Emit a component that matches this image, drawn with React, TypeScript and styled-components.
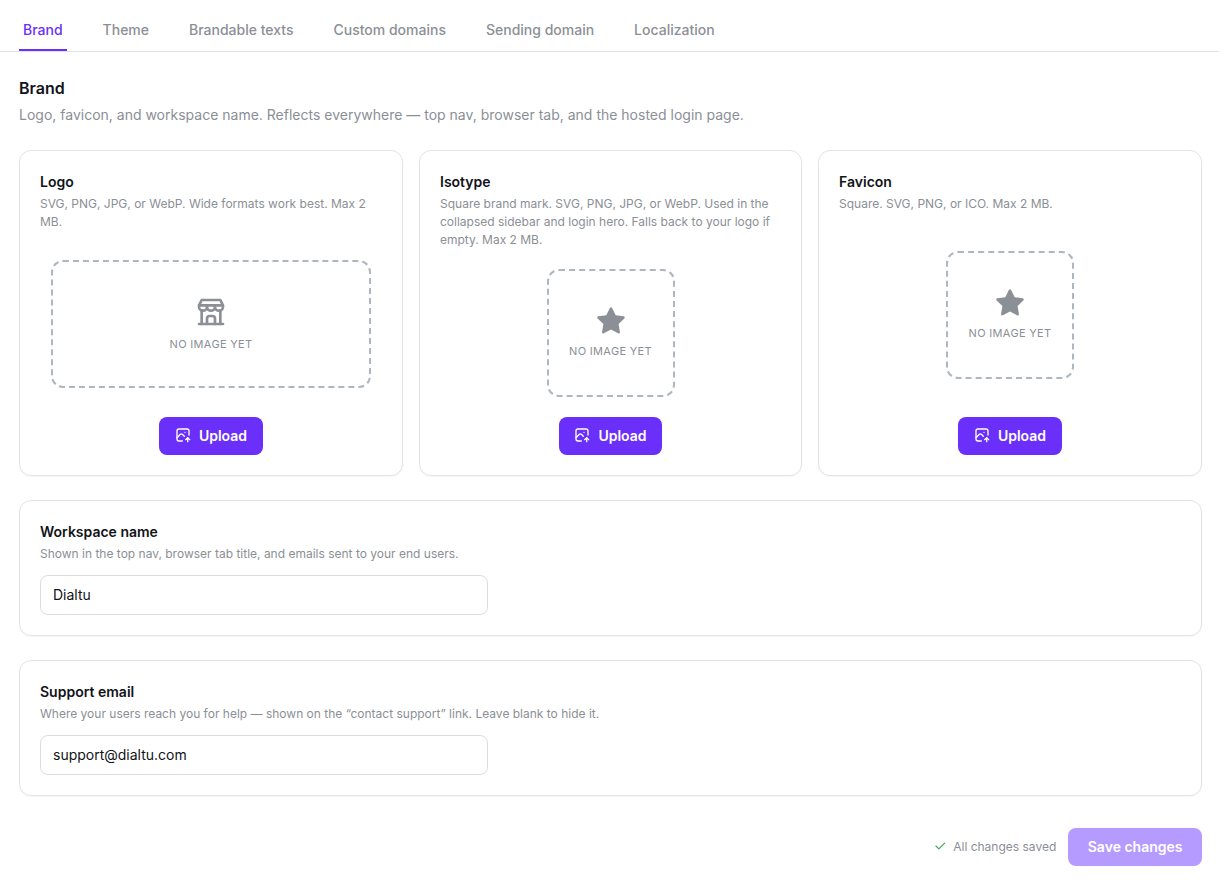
import * as React from "react";
import styled, { createGlobalStyle } from "styled-components";

const tabs = ["Brand", "Theme", "Brandable texts", "Custom domains", "Sending domain", "Localization"];

const StoreIcon = () => (
  <StoreSvg viewBox="0 0 24 24">
    <path d="M3 21h18" />
    <path d="M3 7v1a3 3 0 0 0 6 0V7m0 1a3 3 0 0 0 6 0V7m0 1a3 3 0 0 0 6 0V7H3l2-4h14l2 4" />
    <path d="M5 21V10.85" />
    <path d="M19 21V10.85" />
    <path d="M9 21v-4a2 2 0 0 1 2-2h2a2 2 0 0 1 2 2v4" />
  </StoreSvg>
);

const StarIcon = () => (
  <StarSvg viewBox="0 0 24 24">
    <path d="M8.243 7.34l-6.38 .925l-.113 .023a1 1 0 0 0 -.44 1.684l4.622 4.499l-1.09 6.355l-.013 .11a1 1 0 0 0 1.464 .944l5.706 -3l5.693 3l.1 .046a1 1 0 0 0 1.352 -1.1l-1.091 -6.355l4.624 -4.5l.078 -.085a1 1 0 0 0 -.633 -1.62l-6.38 -.926l-2.852 -5.78a1 1 0 0 0 -1.794 0l-2.853 5.78z" />
  </StarSvg>
);

const UploadImageIcon = () => (
  <svg width="16" height="16" viewBox="0 0 24 24" fill="none" stroke="#fff" strokeWidth="2" strokeLinecap="round" strokeLinejoin="round">
    <path d="M11 21H6a3 3 0 0 1-3-3V6a3 3 0 0 1 3-3h12a3 3 0 0 1 3 3v6" />
    <path d="M15 8h.01" />
    <path d="M3 16l5-5c.9-.9 2.1-.9 3 0l3 3" />
    <path d="M19 22v-6" />
    <path d="M22 19l-3-3-3 3" />
  </svg>
);

const CheckIcon = () => (
  <svg width="14" height="14" viewBox="0 0 24 24" fill="none" stroke="#3fa85a" strokeWidth="2" strokeLinecap="round" strokeLinejoin="round">
    <path d="M5 12l5 5L20 7" />
  </svg>
);

const App: React.FunctionComponent = () => {
  return (
    <>
      <GlobalStyle />
      <TabBar>
        {tabs.map((t, i) => (
          <Tab key={t} $active={i === 0}>
            {t}
          </Tab>
        ))}
      </TabBar>
      <Page>
        <Heading>Brand</Heading>
        <Subheading>
          Logo, favicon, and workspace name. Reflects everywhere — top nav, browser tab, and the hosted login page.
        </Subheading>
        <AssetGrid>
          <AssetCard>
            <CardTitle>Logo</CardTitle>
            <CardDesc>SVG, PNG, JPG, or WebP. Wide formats work best. Max 2 MB.</CardDesc>
            <DropArea>
              <Dropzone $wide>
                <StoreIcon />
                <DropLabel>No image yet</DropLabel>
              </Dropzone>
            </DropArea>
            <UploadButton>
              <UploadImageIcon />
              Upload
            </UploadButton>
          </AssetCard>
          <AssetCard>
            <CardTitle>Isotype</CardTitle>
            <CardDesc>
              Square brand mark. SVG, PNG, JPG, or WebP. Used in the collapsed sidebar and login hero. Falls back to your logo if empty. Max 2 MB.
            </CardDesc>
            <DropArea>
              <Dropzone>
                <StarIcon />
                <DropLabel>No image yet</DropLabel>
              </Dropzone>
            </DropArea>
            <UploadButton>
              <UploadImageIcon />
              Upload
            </UploadButton>
          </AssetCard>
          <AssetCard>
            <CardTitle>Favicon</CardTitle>
            <CardDesc>Square. SVG, PNG, or ICO. Max 2 MB.</CardDesc>
            <DropArea>
              <Dropzone>
                <StarIcon />
                <DropLabel>No image yet</DropLabel>
              </Dropzone>
            </DropArea>
            <UploadButton>
              <UploadImageIcon />
              Upload
            </UploadButton>
          </AssetCard>
        </AssetGrid>
        <FieldCard>
          <CardTitle>Workspace name</CardTitle>
          <CardDesc>Shown in the top nav, browser tab title, and emails sent to your end users.</CardDesc>
          <TextInput defaultValue="Dialtu" />
        </FieldCard>
        <FieldCard>
          <CardTitle>Support email</CardTitle>
          <CardDesc>Where your users reach you for help — shown on the “contact support” link. Leave blank to hide it.</CardDesc>
          <TextInput defaultValue="support@dialtu.com" />
        </FieldCard>
        <Footer>
          <SavedStatus>
            <CheckIcon />
            All changes saved
          </SavedStatus>
          <SaveButton disabled>Save changes</SaveButton>
        </Footer>
      </Page>
    </>
  );
};

export default App;

const GlobalStyle = createGlobalStyle`
  body {
    margin: 0;
    background: #fff;
    font-family: Inter, "Noto Sans", sans-serif;
    color: #111318;
  }
`;

const StoreSvg = styled.svg`
  width: 32px;
  height: 32px;
  margin-bottom: 2px;
  fill: none;
  stroke: #8b8f96;
  stroke-width: 2;
  stroke-linecap: round;
  stroke-linejoin: round;
`;

const StarSvg = styled.svg`
  width: 30px;
  height: 30px;
  fill: #8b8f96;
  margin-bottom: 1px;
`;

const TabBar = styled.div`
  display: flex;
  gap: 32px;
  height: 52px;
  padding: 0 19px;
  box-sizing: border-box;
  border-bottom: 1px solid #e2e3e8;
`;

const Tab = styled.div<{ $active?: boolean }>`
  height: 51px;
  box-sizing: border-box;
  padding: 10px 4px 0;
  display: flex;
  align-items: center;
  font-size: 14px;
  font-weight: 500;
  color: ${(p) => (p.$active ? "#6b2ffa" : "#8b8f96")};
  border-bottom: 2px solid ${(p) => (p.$active ? "#6b2ffa" : "transparent")};
`;

const Page = styled.div`
  padding: 24px 17px 14px 19px;
  display: flex;
  flex-direction: column;
`;

const Heading = styled.h2`
  margin: 0;
  font-size: 16px;
  line-height: 24px;
  font-weight: 600;
`;

const Subheading = styled.p`
  margin: 4px 0 0;
  font-size: 14px;
  line-height: 21px;
  color: #8b8f96;
`;

const AssetGrid = styled.div`
  display: grid;
  grid-template-columns: 384px 383px 384px;
  gap: 16px;
  margin-top: 25px;
  height: 326px;
`;

const Card = styled.div`
  background: #fff;
  border: 1px solid #e2e3e8;
  border-radius: 12px;
  padding: 20px;
  box-shadow: 0 1px 2px rgba(16, 24, 40, 0.04);
`;

const AssetCard = styled(Card)`
  display: flex;
  flex-direction: column;
  min-width: 0;
`;

const FieldCard = styled(Card)`
  margin-top: 24px;
  display: flex;
  flex-direction: column;
`;

const CardTitle = styled.div`
  font-size: 14px;
  line-height: 21px;
  font-weight: 600;
`;

const CardDesc = styled.div`
  margin-top: 3px;
  font-size: 12px;
  line-height: 18px;
  color: #8b8f96;
`;

const DropArea = styled.div`
  flex: 1;
  display: flex;
  align-items: center;
  justify-content: center;
`;

const Dropzone = styled.div<{ $wide?: boolean }>`
  width: ${(p) => (p.$wide ? "320px" : "128px")};
  height: 128px;
  box-sizing: border-box;
  padding-bottom: ${(p) => (p.$wide ? "0" : "2px")};
  border: 2px dashed #aeb6c0;
  border-radius: 12px;
  display: flex;
  flex-direction: column;
  align-items: center;
  justify-content: center;
  gap: 6px;
`;

const DropLabel = styled.div`
  font-size: 11px;
  line-height: 16px;
  letter-spacing: 0.33px;
  text-transform: uppercase;
  color: #8b8f96;
`;

const UploadButton = styled.button`
  align-self: center;
  height: 38px;
  padding: 0 15.5px 2px;
  border: 0;
  border-radius: 8px;
  background: #6b2ffa;
  color: #fff;
  font-family: inherit;
  font-size: 14px;
  font-weight: 600;
  display: flex;
  align-items: center;
  gap: 8px;
`;

const TextInput = styled.input`
  margin-top: 12px;
  width: 448px;
  height: 40px;
  box-sizing: border-box;
  padding: 0 12px 2px;
  border: 1px solid #dcdde3;
  border-radius: 8px;
  outline: none;
  font-family: inherit;
  font-size: 14px;
  color: #111318;
`;

const Footer = styled.div`
  margin-top: 32px;
  display: flex;
  justify-content: flex-end;
  align-items: center;
  gap: 12px;
`;

const SavedStatus = styled.div`
  display: flex;
  align-items: center;
  gap: 6px;
  padding-bottom: 2px;
  font-size: 12px;
  color: #8b8f96;
`;

const SaveButton = styled.button`
  height: 38px;
  padding: 0 19.5px 2px;
  border: 0;
  border-radius: 8px;
  background: #b59bff;
  color: #fff;
  font-family: inherit;
  font-size: 14px;
  font-weight: 600;
`;
